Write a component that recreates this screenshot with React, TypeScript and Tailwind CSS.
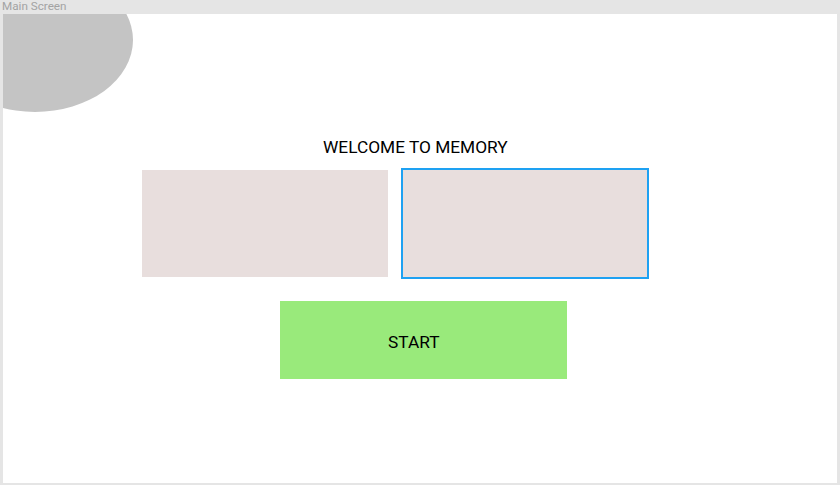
export default function App() {
  return (
    <div className="w-[840px] h-[485px] bg-[#e5e5e5] flex flex-col overflow-hidden" style={{ fontFamily: 'Roboto, "Liberation Sans", sans-serif' }}>
      {/* Artboard label */}
      <div className="h-[14px] pl-[2px] text-[11.7px] leading-[13px] text-[#a3a3a3]">Main Screen</div>

      {/* Artboard */}
      <div className="relative ml-[3px] mr-[3px] mb-[2px] flex-1 bg-white overflow-hidden flex flex-col items-start">
        <div className="absolute left-[-66px] top-[-46px] w-[196px] h-[144px] rounded-[50%] bg-[#c4c4c4]" />

        <h1 className="mt-[123px] ml-[320px] text-[17.3px] leading-[20px] text-black">WELCOME TO MEMORY</h1>

        <div className="mt-[11px] ml-[139px] flex items-center gap-[13px]">
          <div className="w-[246px] h-[107px] bg-[#e8dedd]" />
          <div className="w-[248px] h-[111px] bg-[#e8dedd] border-2 border-[#1ea1f2]" />
        </div>

        <button className="mt-[22px] ml-[277px] w-[287px] h-[78px] bg-[#99ea7b] text-[17.3px] leading-[20px] text-black flex items-center pl-[108px] pt-[4px]">
          START
        </button>
      </div>
    </div>
  );
}
